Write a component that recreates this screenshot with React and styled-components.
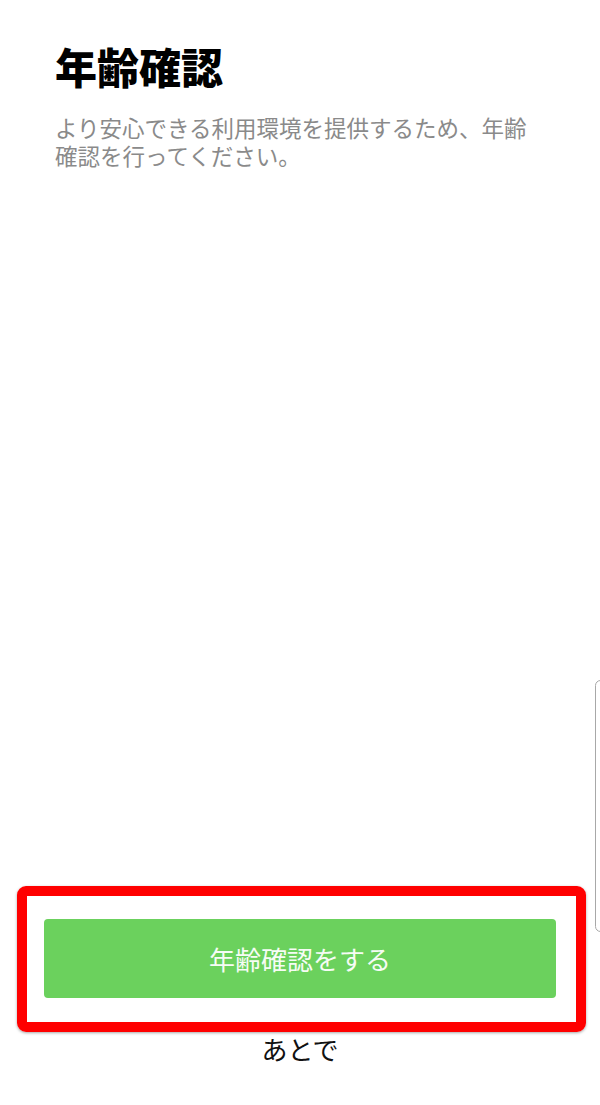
import React from "react";
import styled, { createGlobalStyle } from "styled-components";

const Global = createGlobalStyle`
  html, body { margin: 0; padding: 0; background: #ffffff; }
  body { font-family: "Noto Sans CJK JP", "Noto Sans", sans-serif; }
  * { box-sizing: border-box; }
`;

const Screen = styled.div`
  position: relative;
  width: 600px;
  height: 1105px;
  display: flex;
  flex-direction: column;
  background: #ffffff;
  overflow: hidden;
`;

const Header = styled.header`
  padding: 41px 55px 0 55px;
`;

const Title = styled.h1`
  margin: 0;
  font-size: 42px;
  line-height: 50px;
  font-weight: 900;
  color: #000000;
`;

const Description = styled.p`
  margin: 22px 0 0 0;
  font-size: 22.5px;
  line-height: 28px;
  font-weight: 400;
  color: #8a8a8a;
`;

const Footer = styled.footer`
  margin-top: auto;
  display: flex;
  flex-direction: column;
  align-items: stretch;
  padding-bottom: 41px;
`;

const Highlight = styled.div`
  margin: 0 14px 0 17px;
  padding: 23px 20px 24px 17px;
  border: 10px solid #ff0000;
  border-radius: 9px;
  box-shadow: 0 1px 3px rgba(0, 0, 0, 0.35);
`;

const PrimaryButton = styled.button`
  display: block;
  width: 100%;
  height: 79px;
  border: none;
  border-radius: 4px;
  background: #6bd15d;
  color: #f6fcf5;
  font-family: inherit;
  font-size: 26px;
  font-weight: 400;
  cursor: pointer;
`;

const LaterLink = styled.button`
  margin-top: 2px;
  align-self: center;
  background: none;
  border: none;
  padding: 0;
  font-family: inherit;
  font-size: 26px;
  line-height: 30px;
  color: #111111;
  cursor: pointer;
`;

const EdgeHandle = styled.div`
  position: absolute;
  right: -6px;
  top: 680px;
  width: 11px;
  height: 252px;
  border: 1px solid #a8a8a8;
  border-radius: 6px;
  background: #ffffff;
`;

export default function App() {
  return (
    <>
      <Global />
      <Screen>
        <Header>
          <Title>年齢確認</Title>
          <Description>
            より安心できる利用環境を提供するため、年齢確認を行ってください。
          </Description>
        </Header>
        <Footer>
          <Highlight>
            <PrimaryButton>年齢確認をする</PrimaryButton>
          </Highlight>
          <LaterLink>あとで</LaterLink>
        </Footer>
        <EdgeHandle />
      </Screen>
    </>
  );
}
